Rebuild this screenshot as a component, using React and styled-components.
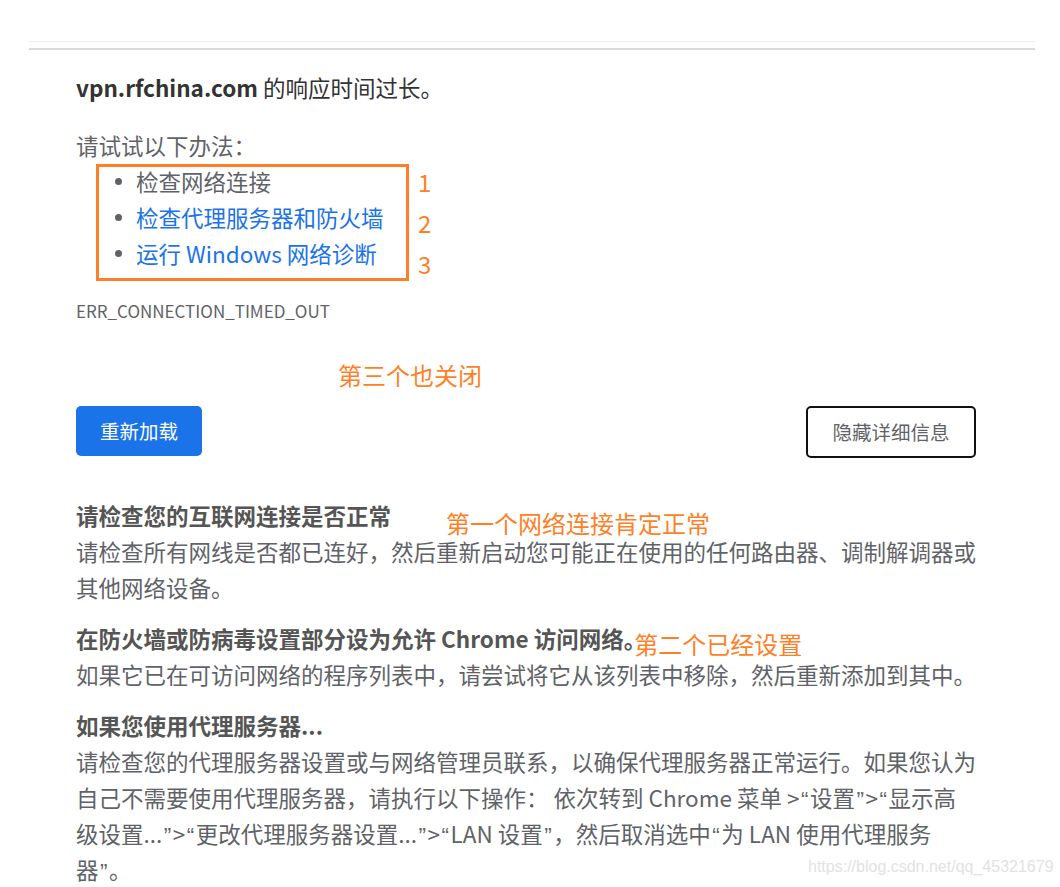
import React from "react";
import styled, { createGlobalStyle } from "styled-components";

const Global = createGlobalStyle`
  html, body { margin: 0; padding: 0; background: #fff; overflow: hidden; }
  body { font-family: "Noto Sans CJK SC", "Noto Sans", sans-serif; color: #5f6368; }
  * { box-sizing: border-box; }
`;

const Page = styled.div`
  position: relative;
  width: 1060px;
  height: 887px;
  overflow: hidden;
`;

const Divider = styled.div`
  margin: 41px 25px 0 29px;
  height: 9px;
  border-top: 1px solid #f0f0f2;
  border-bottom: 2px solid #d9d9de;
`;

const Main = styled.main`
  width: 976px;
  padding-left: 76px;
  font-size: 22.5px;
  line-height: 36px;
`;

const Title = styled.p`
  margin: 19px 0 0;
  color: #333;
  strong { font-weight: 700; }
`;

const Lead = styled.p`
  margin: 22px 0 0;
`;

const ListWrap = styled.div`
  position: relative;
  display: flex;
  align-items: flex-start;
  height: 108px;
`;

const List = styled.ul`
  list-style: none;
  width: 342px;
  margin: 0;
  padding: 0 0 0 39px;
`;

const Item = styled.li`
  display: flex;
  align-items: center;
  color: ${(p) => (p.$link ? "#1a73e8" : "#5f6368")};
  &::before {
    content: "";
    width: 7px;
    height: 7px;
    border-radius: 50%;
    background: #5f6368;
    margin-right: 14px;
    flex: none;
  }
`;

const Highlight = styled.div`
  position: absolute;
  left: 20px;
  top: 1px;
  width: 313px;
  height: 117px;
  border: 3px solid #ff7f27;
  pointer-events: none;
`;

const Numbers = styled.ol`
  list-style: none;
  margin: -2px 0 0;
  padding: 0;
  display: flex;
  flex-direction: column;
  color: #ff7f27;
  font-size: 24px;
  line-height: 41px;
`;

const Annotation = styled.span`
  display: block;
  flex: none;
  color: #ff7f27;
  font-size: 24px;
  font-weight: 400;
  line-height: 28px;
  white-space: nowrap;
  margin-top: ${(p) => p.$top || 0}px;
  margin-left: ${(p) => p.$left || 0}px;
`;

const Code = styled.div`
  margin-top: 28px;
  font-size: 17px;
  line-height: 24px;
  color: #5f6368;
`;

const CodeNote = styled(Annotation)`
  margin: 37px 0 0 262px;
  line-height: 30px;
`;

const Buttons = styled.div`
  display: flex;
  justify-content: space-between;
  align-items: flex-start;
  width: 900px;
  margin-top: 16px;
`;

const Button = styled.button`
  font-family: inherit;
  font-size: 19.5px;
  line-height: 26px;
  border-radius: 5px;
  cursor: pointer;
  background: ${(p) => (p.$primary ? "#1a73e8" : "#fff")};
  color: ${(p) => (p.$primary ? "#fff" : "#5f6368")};
  border: ${(p) => (p.$primary ? "0" : "2px solid #111")};
  padding: ${(p) => (p.$primary ? "12px 24px" : "11px 24px")};
  height: ${(p) => (p.$primary ? "50px" : "52px")};
  width: ${(p) => (p.$primary ? "126px" : "170px")};
  white-space: nowrap;
`;

const Details = styled.div`
  width: 900px;
  margin-top: 39px;
  display: flex;
  flex-direction: column;
  gap: 15px;
`;

const Section = styled.section``;

const HeadingRow = styled.div`
  display: flex;
  align-items: flex-start;
  height: 36px;
`;

const Heading = styled.h3`
  margin: 0;
  font-size: 22.5px;
  line-height: 36px;
  font-weight: 700;
  color: #555;
  white-space: nowrap;
`;

const Body = styled.p`
  margin: 0;
  color: #5f6368;
`;

const Q = styled.span`
  font-family: "Liberation Sans", Arial, sans-serif;
  line-height: 1;
  padding: 0 1.5px;
`;

const Watermark = styled.div`
  position: absolute;
  left: 808px;
  top: 857px;
  font-family: "Liberation Sans", Arial, sans-serif;
  font-size: 16px;
  line-height: 20px;
  color: #e2e2e2;
  white-space: nowrap;
`;

export default function App() {
  return (
    <Page>
      <Global />
      <Divider />
      <Main>
        <Title>
          <strong>vpn.rfchina.com</strong> 的响应时间过长。
        </Title>
        <Lead>请试试以下办法：</Lead>
        <ListWrap>
          <List>
            <Item>检查网络连接</Item>
            <Item $link>检查代理服务器和防火墙</Item>
            <Item $link>运行 Windows 网络诊断</Item>
          </List>
          <Numbers>
            <li>1</li>
            <li>2</li>
            <li>3</li>
          </Numbers>
          <Highlight />
        </ListWrap>
        <Code>ERR_CONNECTION_TIMED_OUT</Code>
        <CodeNote>第三个也关闭</CodeNote>
        <Buttons>
          <Button $primary>重新加载</Button>
          <Button>隐藏详细信息</Button>
        </Buttons>
        <Details>
          <Section>
            <HeadingRow>
              <Heading>请检查您的互联网连接是否正常</Heading>
              <Annotation $left={55} $top={12}>第一个网络连接肯定正常</Annotation>
            </HeadingRow>
            <Body>
              请检查所有网线是否都已连好，然后重新启动您可能正在使用的任何路由器、调制解调器或其他网络设备。
            </Body>
          </Section>
          <Section>
            <HeadingRow>
              <Heading>在防火墙或防病毒设置部分设为允许 Chrome 访问网络。</Heading>
              <Annotation $left={-12} $top={10}>第二个已经设置</Annotation>
            </HeadingRow>
            <Body>
              如果它已在可访问网络的程序列表中，请尝试将它从该列表中移除，然后重新添加到其中。
            </Body>
          </Section>
          <Section>
            <HeadingRow>
              <Heading>如果您使用代理服务器...</Heading>
            </HeadingRow>
            <Body>
              请检查您的代理服务器设置或与网络管理员联系，以确保代理服务器正常运行。如果您认为自己不需要使用代理服务器，请执行以下操作：
              依次转到 Chrome 菜单 &gt;<Q>“</Q>设置<Q>”</Q>&gt;<Q>“</Q>显示高级设置...<Q>”</Q>&gt;<Q>“</Q>更改代理服务器设置...<Q>”</Q>&gt;<Q>“</Q>LAN 设置<Q>”</Q>，然后取消选中<Q>“</Q>为 LAN 使用代理服务器<Q>”</Q>。
            </Body>
          </Section>
        </Details>
      </Main>
      <Watermark>https://blog.csdn.net/qq_45321679</Watermark>
    </Page>
  );
}
